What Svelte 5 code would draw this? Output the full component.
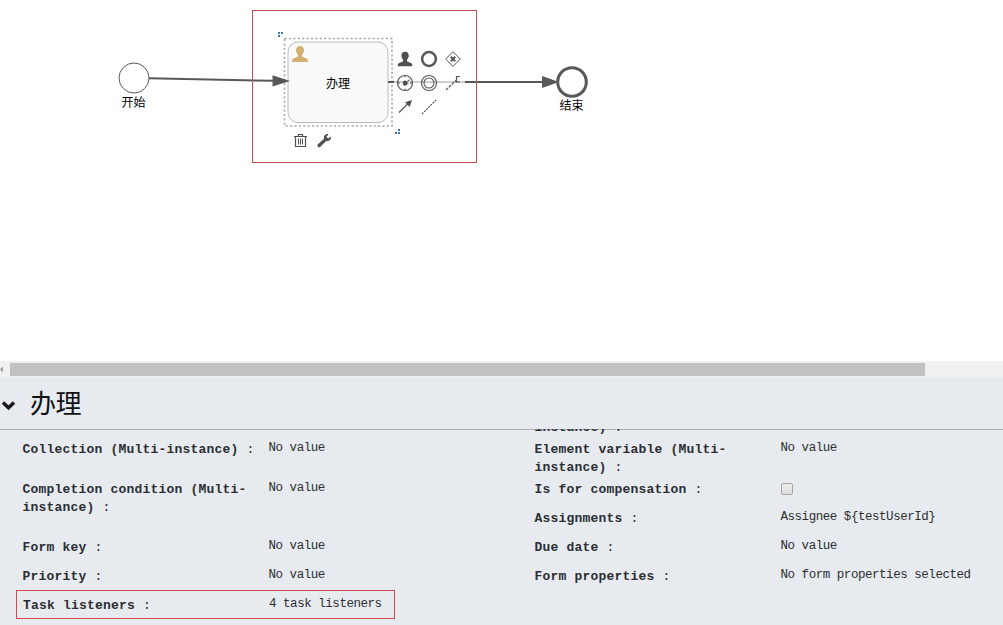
<script>
  const rows = [
    { label: 'instance)', value: '', side: 'right', tail: true },
    { label: 'Collection (Multi-instance)', value: 'No value' },
    { label: 'Element variable (Multi-instance)', value: 'No value', side: 'right' },
    { label: 'Completion condition (Multi-instance)', value: 'No value', double: true },
    { label: 'Is for compensation', check: true, side: 'right' },
    { label: 'Assignments', value: 'Assignee ${testUserId}', side: 'right' },
    { label: 'Form key', value: 'No value' },
    { label: 'Due date', value: 'No value', side: 'right' },
    { label: 'Priority', value: 'No value' },
    { label: 'Form properties', value: 'No form properties selected', side: 'right' },
    { label: 'Task listeners', value: '4 task listeners', marked: true }
  ];
</script>

<div class="app">
  <svg class="canvas" width="1003" height="361" viewBox="0 0 1003 361">
    <defs>
      <path id="person" d="M8 0C5.400 0 4 1.700 4 4.300c0 2 .9 3.400 1.900 4.300v1.600C5.400 11.400 .7 11.900 .1 14V16h15.800v-2C15.300 11.900 10.600 11.400 10.100 10.200V8.600C11.100 7.700 12 6.300 12 4.300C12 1.700 10.600 0 8 0z" />
    </defs>

    <circle cx="134" cy="78" r="15" fill="#fff" stroke="#585858" />
    <path d="M149 78.200L273 80.800" stroke="#585858" stroke-width="2" />
    <text x="133.500" y="107">开始</text>

    <rect x="284.500" y="38.500" width="107.500" height="87.500" fill="none" stroke="#aaa" stroke-width="1.600" stroke-dasharray="2.200 2.200" />
    <rect x="288" y="42" width="100" height="80.500" rx="10" fill="#f9f9f9" stroke="#bbb" />
    <path d="M272.500 75.300L290 81L272.500 86.500z" fill="#585858" />
    <use href="#person" transform="translate(292 46)" fill="#d1b070" />
    <text x="338" y="88">办理</text>
    <g fill="#4178a8">
      <path d="M278 32h2v2h-2zM281 32h2v2h-2zM278 35h2v2h-2z" />
      <path d="M398 129h2v2h-2zM395 132h2v2h-2zM398 132h2v2h-2z" />
    </g>

    <path d="M388 82H394M465 82H543" stroke="#585858" stroke-width="2" />
    <path d="M394 82H465" stroke="#bdbdbd" stroke-width="1.500" />
    <path d="M542 76L559 82L542 88z" fill="#585858" />
    <circle cx="572" cy="82" r="14.300" fill="#fff" stroke="#585858" stroke-width="3" />
    <text x="571.500" y="109.500">结束</text>

    <use href="#person" transform="translate(397.800 51.800) scale(.91)" fill="#505050" />
    <circle cx="429" cy="59" r="6.900" fill="none" stroke="#585858" stroke-width="2.500" />
    <g fill="none" stroke="#555">
      <path d="M453 51.700L460.300 59L453 66.300L445.700 59z" />
      <path d="M450.800 56.800L455.200 61.200M455.200 56.800L450.800 61.200" stroke-width="2" />
      <circle cx="405" cy="83" r="7.500" stroke-width="1.200" />
      <path d="M405 76v1.500M405 88.500v1.500M398 83h2M410 83h2M405 83L409.700 79.700" />
      <circle cx="429" cy="83" r="7.500" stroke-width="1.100" />
      <circle cx="429" cy="83" r="5" stroke-width="1.100" />
      <path d="M446 90L456 80.500" stroke-width="1.200" stroke-dasharray="3 1" />
      <path d="M460 76.500H456.500V82H460" stroke-width="1.200" />
      <path d="M399 112.500L408 103.500" stroke-width="1.300" />
      <path d="M422 114L436 100" stroke-width="1.200" stroke-dasharray="2 1" />
    </g>
    <path d="M402.800 83a2.200 2.200 0 0 0 4.400 1L409 85L406 80.800a2.200 2.200 0 0 0-3.200 2.200z" fill="#505050" />
    <path d="M412 100L409.700 107L405 102.300z" fill="#505050" />

    <g fill="none" stroke="#505050">
      <path d="M294 136.500h13M298.500 136v-1.500h4V136M295.500 137v9.500h10V137" stroke-width="1.200" />
      <path d="M298.500 138.500v6M300.500 138.500v6M302.500 138.500v6" />
    </g>
    <path d="M328.500 134.200C325.500 133.500 323.300 136 324 138.700L317.700 144.600C316.600 146 318.500 148.300 320.100 147L326.200 141C329 141.700 331.600 139.500 330.900 136.600L328.300 138.500L326.400 136.900z" fill="#505050" />
    <rect x="252.500" y="10.500" width="224" height="152" fill="none" stroke="#c45055" />
  </svg>

  <div class="scrollbar">
    <svg width="10" height="17" viewBox="0 0 10 17"><path d="M3 5.500V11.500L0 8.500z" fill="#999" /></svg>
    <div class="thumb"></div>
  </div>

  <header>
    <svg width="17" height="12" viewBox="0 0 17 12"><path d="M3 3.500L8.500 8.800L14 3.500" fill="none" stroke="#16181b" stroke-width="3.400" /></svg>
    <h1>办理</h1>
  </header>

  <section class="body">
    <div class="grid">
      {#each rows as row}
        <div class="row" class:right={row.side === 'right'} class:double={row.double} class:tail={row.tail} class:marked={row.marked}>
          <div class="label"><b>{row.label}</b> :</div>
          {#if row.check}
            <div class="value"><span class="check"></span></div>
          {:else}
            <div class="value">{row.value}</div>
          {/if}
        </div>
      {/each}
    </div>
  </section>
</div>

<style>
  :global(body) { margin: 0; background: #fff; }
  .app {
    width: 1003px;
    height: 625px;
    overflow: hidden;
    display: flex;
    flex-direction: column;
    background: #e7ebf0;
    color: #2c2e31;
  }
  .canvas { display: block; flex: none; background: #fff; }
  .canvas text {
    font: 12px "Noto Sans CJK SC", sans-serif;
    text-anchor: middle;
    fill: #000;
  }
  .scrollbar {
    flex: none;
    height: 17px;
    display: flex;
    align-items: center;
    background: #f0f0f0;
  }
  .thumb { width: 915px; height: 13px; background: #c1c1c1; }
  header {
    flex: none;
    box-sizing: border-box;
    height: 52px;
    display: flex;
    align-items: center;
    gap: 13px;
    border-bottom: 1px solid #a9adb3;
  }
  header svg { margin-top: 3px; }
  h1 {
    margin: -4px 0 0;
    font: 400 26px/50px "Noto Sans CJK SC", sans-serif;
    letter-spacing: -0.5px;
    color: #111;
  }
  .body { flex: 1; min-height: 0; overflow: hidden; margin-top: -1px; }
  .grid {
    margin-top: -28px;
    display: grid;
    grid-template-columns: 512px 1fr;
    grid-template-rows: 40px 40px repeat(5, 29px);
    font-family: "Liberation Mono", monospace;
  }
  .row {
    display: grid;
    grid-template-columns: 246px 1fr;
    padding-left: 22.5px;
    align-items: start;
    grid-column: 1;
  }
  .right { grid-column: 2; }
  .double { grid-row: span 2; }
  .tail { padding-top: 18px; }
  .label {
    font-size: 13px;
    line-height: 18px;
    letter-spacing: 0.2px;
    width: 236px;
  }
  .value {
    font-size: 12.5px;
    line-height: 14px;
    letter-spacing: -0.46px;
    white-space: nowrap;
  }
  .check {
    display: block;
    box-sizing: border-box;
    width: 12px;
    height: 12px;
    margin-top: 2px;
    border: 1px solid #a5a5a5;
    border-radius: 2px;
    background: linear-gradient(#eee, #dcdcdc);
  }
  .marked {
    box-sizing: border-box;
    width: 379px;
    height: 29px;
    margin: -7px 0 0 16px;
    padding: 6px 0 0 6px;
    border: 1px solid #cf4b50;
  }
</style>
